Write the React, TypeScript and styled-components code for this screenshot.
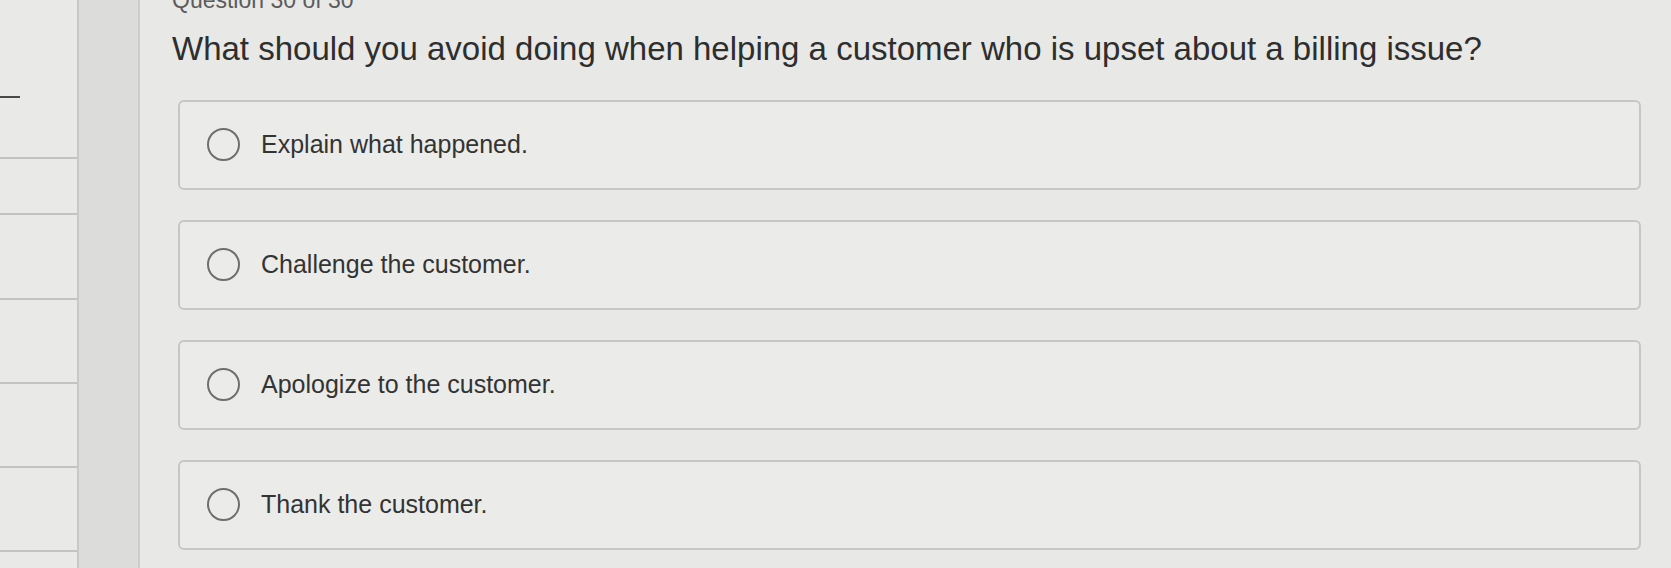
import styled, { createGlobalStyle } from "styled-components";

const GlobalStyle = createGlobalStyle`
  html, body {
    margin: 0;
    padding: 0;
    background: #e8e8e6;
  }
  body {
    font-family: "Liberation Sans", Arial, sans-serif;
    overflow: hidden;
  }
`;

const Page = styled.div`
  display: flex;
  width: 1671px;
  height: 568px;
  overflow: hidden;
  background: #e8e8e6;
`;

// left navigation column (mostly cut off in the photo)
const Sidebar = styled.div`
  width: 77px;
  flex-shrink: 0;
  display: flex;
  flex-direction: column;
  background: #e9e9e7;
`;

const SideTop = styled.div`
  height: 157px;
  flex-shrink: 0;
  padding-top: 96px;
  box-sizing: border-box;
`;

const Dash = styled.div`
  width: 20px;
  height: 2px;
  background: #4a4a4a;
`;

const SideRow = styled.div<{ $h: number }>`
  height: ${({ $h }) => $h}px;
  box-sizing: border-box;
  border-top: 2px solid #c3c3c1;
  flex-shrink: 0;
`;

const Strip = styled.div`
  width: 59px;
  flex-shrink: 0;
  background: #dcdcda;
  border-left: 2px solid #c8c8c6;
  border-right: 2px solid #cdcdcb;
`;

const Main = styled.main`
  flex: 1;
  padding: 0 30px 0 32px;
  display: flex;
  flex-direction: column;
`;

const Counter = styled.div`
  margin-top: -11px;
  font-size: 23px;
  line-height: 23px;
  color: #5c5c5c;
  white-space: nowrap;
`;

const Question = styled.h1`
  margin: 17px 0 31px 0;
  font-size: 33px;
  line-height: 1.2;
  font-weight: 400;
  color: #2e2e2e;
  white-space: nowrap;
`;

const Options = styled.div`
  display: flex;
  flex-direction: column;
  gap: 30px;
  margin-left: 6px;
`;

const Option = styled.label`
  display: flex;
  align-items: center;
  gap: 21px;
  height: 90px;
  box-sizing: border-box;
  padding-left: 27px;
  border: 2px solid #c6c6c4;
  border-radius: 6px;
  background: #ebebe9;
  cursor: pointer;
`;

const Radio = styled.span`
  width: 33px;
  height: 33px;
  box-sizing: border-box;
  border-radius: 50%;
  border: 2px solid #6e6e6e;
  flex-shrink: 0;
`;

const OptionText = styled.span`
  font-size: 25px;
  color: #333333;
`;

const answers = [
  "Explain what happened.",
  "Challenge the customer.",
  "Apologize to the customer.",
  "Thank the customer.",
];

const sideRows = [56, 85, 84, 84, 84, 20];

export default function App() {
  return (
    <>
      <GlobalStyle />
      <Page>
        <Sidebar>
          <SideTop>
            <Dash />
          </SideTop>
          {sideRows.map((h, i) => (
            <SideRow key={i} $h={h} />
          ))}
        </Sidebar>
        <Strip />
        <Main>
          <Counter>Question 30 of 30</Counter>
          <Question>What should you avoid doing when helping a customer who is upset about a billing issue?</Question>
          <Options>
            {answers.map((a) => (
              <Option key={a}>
                <Radio />
                <OptionText>{a}</OptionText>
              </Option>
            ))}
          </Options>
        </Main>
      </Page>
    </>
  );
}
